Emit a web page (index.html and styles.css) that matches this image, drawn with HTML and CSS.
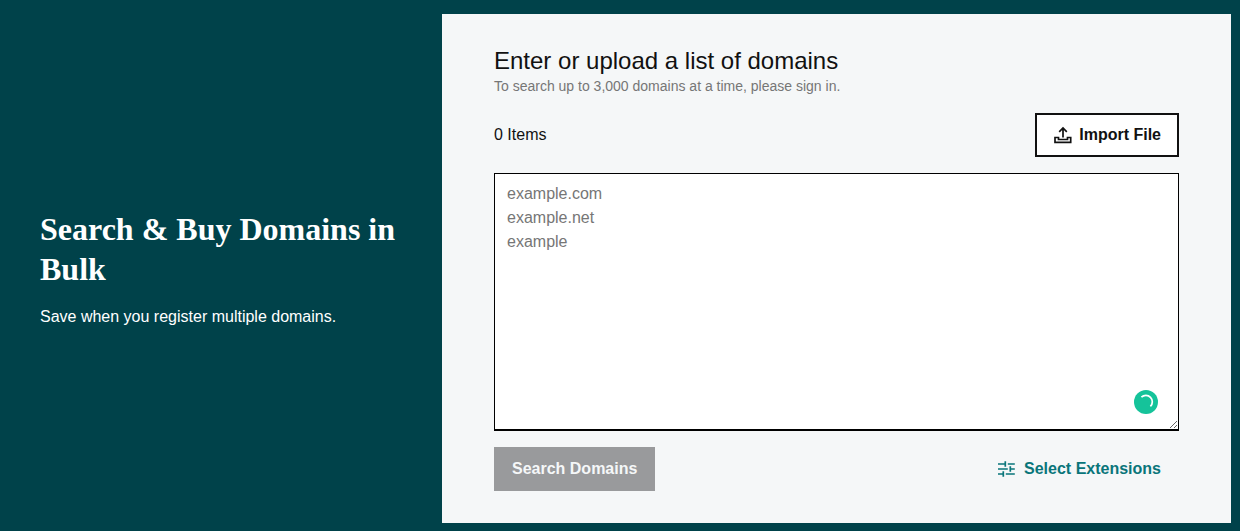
FILE: index.html
```html
<!DOCTYPE html>
<html lang="en">
<head>
    <meta charset="UTF-8">
    <meta name="viewport" content="width=device-width, initial-scale=1.0">
    <title>Bulk Domain Search</title>
    <link rel="stylesheet" href="styles.css">
</head>
<body>
    <main class="bulk-search">
        <section class="intro">
            <h1>Search &amp; Buy Domains in Bulk</h1>
            <p>Save when you register multiple domains.</p>
        </section>

        <form class="panel">
            <h2><label for="domains">Enter or upload a list of domains</label></h2>
            <p class="hint">To search up to 3,000 domains at a time, please sign in.</p>

            <div class="row">
                <span>0 Items</span>
                <button type="button" class="btn btn-import">
                    <svg class="icon" width="20" height="20" viewBox="0 0 20 20" fill="none" stroke="currentColor" stroke-width="1.7" aria-hidden="true">
                        <path d="M10 12.5V3.5M6.2 6.8L10 3L13.8 6.8"/>
                        <path d="M2 12.5H5.5V14.5H14.5V12.5H17.7V17.3H2Z"/>
                    </svg>
                    Import File
                </button>
            </div>

            <div class="field">
                <textarea id="domains" placeholder="example.com&#10;example.net&#10;example"></textarea>
                <!-- writing assistant badge -->
                <svg class="badge" width="24" height="24" viewBox="0 0 24 24" fill="none" aria-hidden="true">
                    <circle cx="12" cy="12" r="12" fill="#15c39a"/>
                    <path d="M7.4 7.2A6.2 6.2 0 0 1 16.4 16.4" stroke="#fff" stroke-width="1.7"/>
                </svg>
            </div>

            <div class="row">
                <button type="submit" class="btn btn-search" disabled>Search Domains</button>
                <button type="button" class="btn btn-extensions">
                    <svg class="icon" width="20" height="20" viewBox="0 0 20 20" fill="none" stroke="currentColor" stroke-width="1.7" aria-hidden="true">
                        <path d="M2 5H9.3M9.3 2.2V7.8M11.8 5H18.8"/>
                        <path d="M2 10H11.8M14.3 7.2V12.8M14.3 10H18.8"/>
                        <path d="M2 15H7.3M7.3 12.2V17.8M9.8 15H18.8"/>
                    </svg>
                    Select Extensions
                </button>
            </div>
        </form>
    </main>
</body>
</html>
```

FILE: styles.css
```css
* {
    box-sizing: border-box;
}

body {
    margin: 0;
    background-color: #00424a; /* Dark teal background */
    color: #111;
    font-family: "Liberation Sans", Arial, sans-serif;
    font-size: 16px;
    line-height: 24px;
}

h1, h2, p {
    margin: 0;
}

.bulk-search {
    display: grid;
    grid-template-columns: 402px 1fr;
    padding: 14px 9px 8px 40px;
}

.intro {
    display: flex;
    flex-direction: column;
    justify-content: center;
    gap: 16px;
    padding-right: 40px;
    color: white;
}

.intro h1 {
    font-family: "Liberation Serif", "Times New Roman", serif;
    font-size: 32px;
    line-height: 40px;
}

.panel {
    padding: 32px 52px;
    background-color: #f5f7f8;
}

.panel h2 {
    font-size: 24px;
    font-weight: normal;
    line-height: 30px;
}

.hint {
    margin-bottom: 16px;
    color: #767676;
    font-size: 14px;
    line-height: 21px;
}

.row {
    display: flex;
    align-items: center;
    justify-content: space-between;
}

.btn {
    display: flex;
    align-items: center;
    gap: 6px;
    height: 44px;
    padding: 0 16px;
    border: 2px solid transparent;
    font-family: inherit;
    font-size: 16px;
    font-weight: bold;
    cursor: pointer;
}

.btn-import {
    border-color: #111;
    background-color: white;
    color: #111;
}

.btn-search {
    border-color: #999a9c;
    background-color: #999a9c;
    color: #f5f7f8;
    cursor: default;
}

.btn-extensions {
    gap: 8px;
    background-color: transparent;
    color: #09757a;
}

.field {
    position: relative;
    margin: 16px 0;
}

.field textarea {
    display: block;
    width: 100%;
    height: 258px;
    padding: 8px 12px;
    border: 1px solid black;
    border-bottom-width: 2px;
    border-radius: 0;
    background-color: white;
    color: #111;
    font-family: inherit;
    font-size: 16px;
    line-height: 24px;
    resize: vertical;
}

.field textarea::placeholder {
    color: #767676;
}

/* Sits over the bottom right corner of the text box */
.badge {
    position: absolute;
    right: 21px;
    bottom: 17px;
}

@media (max-width: 900px) {
    .bulk-search {
        grid-template-columns: 1fr;
        gap: 24px;
        padding: 24px 8px 8px;
    }

    .panel {
        padding: 32px 16px;
    }
}
```
